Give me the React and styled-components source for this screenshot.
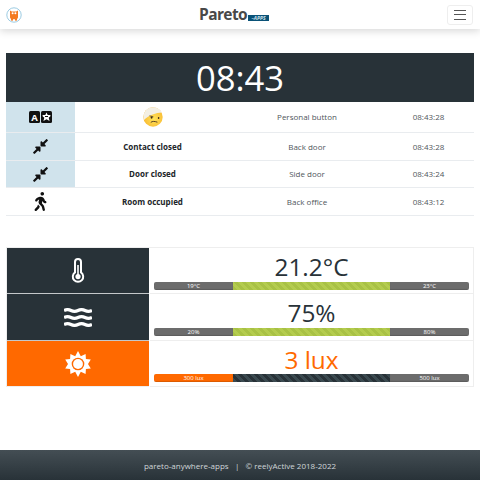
import React from 'react';
import styled, { createGlobalStyle } from 'styled-components';
import { FaCompressAlt, FaWalking } from 'react-icons/fa';

const Global = createGlobalStyle`
  html, body { margin: 0; padding: 0; background: #fff; }
  body { font-family: "Open Sans", "Noto Sans", sans-serif; color: #212529; }
  * { box-sizing: border-box; }
`;
const Page = styled.div`
  width: 480px; height: 480px; display: flex; flex-direction: column; overflow: hidden;
`;
const Navbar = styled.header`
  height: 29px; flex: none; display: flex; align-items: center; justify-content: space-between;
  padding: 0 7px 0 6px; background: #fff; box-shadow: 0 2px 8px rgba(0,0,0,.16); position: relative;
`;
const Brand = styled.div`
  display: flex; align-items: flex-end; position: absolute; left: 199px; top: 7px; height: 15px;
`;
const BrandName = styled.span`
  font-family: "Open Sans", sans-serif; font-weight: 700; font-size: 15.5px; line-height: 15px; color: #484848; letter-spacing: -0.6px;
`;
const AppsTag = styled.span`
  width: 21px; height: 6px; margin: 0 0 1px 1px; background: #0a5277; color: #cfe3ee;
  font: italic 700 5px/6px "Open Sans", sans-serif; text-align: center; overflow: hidden;
`;
const Toggler = styled.button`
  width: 26px; height: 20px; padding: 0; background: #fff; border: 1px solid #eee; border-radius: 3px;
  display: flex; flex-direction: column; align-items: center; justify-content: center; gap: 3.5px;
`;
const TogglerBar = styled.span`
  width: 12px; height: 1px; background: #555; display: block;
`;
const Main = styled.main`
  flex: 1; padding: 24px 6px 0;
`;
const Clock = styled.div`
  height: 49px; background: #283238; color: #fff; text-align: center; font-size: 34.6px; line-height: 49px; font-weight: 400;
`;
const Row = styled.div`
  display: grid; grid-template-columns: 69px 155px 154px 89px; height: ${p => p.$h}px; border-bottom: 1px solid #e9ecef;
  align-items: stretch;
`;
const IconCell = styled.div`
  display: flex; align-items: center; justify-content: center; background: ${p => p.$tint ? '#d0e3ec' : 'transparent'};
  color: #111;
`;
const Cell = styled.div`
  display: flex; align-items: center; justify-content: center; font-size: 8px; padding-bottom: 1px;
  font-weight: ${p => p.$bold ? 700 : 400};
  color: ${p => p.$bold ? '#212529' : '#4f565b'};
`;
const Stats = styled.section`
  margin: 31px 0 0 0; width: 468px; display: grid; grid-template-columns: 142px 1fr; grid-template-rows: 46px 47px 46px;
  border-top: 1px solid #eee; border-left: 1px solid #eee;
`;
const StatIcon = styled.div`
  display: flex; align-items: center; justify-content: center; color: #fff;
  background: ${p => p.$accent ? '#ff6900' : '#283238'};
  border-bottom: 1px solid ${p => p.$accent ? '#eee' : '#c4c8ca'};
`;
const StatBody = styled.div`
  margin-left: 1px; padding: 0 4px 0 4px; border-bottom: 1px solid #eee; border-right: 1px solid #eee;
  display: flex; flex-direction: column; align-items: stretch;
`;
const Value = styled.div`
  height: ${p => p.$accent ? 33 : 34}px; text-align: center; font-size: 24.4px; line-height: ${p => p.$accent ? 37 : 38}px; font-weight: 400;
  color: ${p => p.$accent ? '#ff6900' : '#283238'};
`;
const Progress = styled.div`
  height: 8px; display: grid; grid-template-columns: 79px 157px 79px; border-radius: 2px; overflow: hidden;
  background: #eee;
`;
const Segment = styled.div`
  font-size: 6px; line-height: 8px; text-align: center; color: #fff; background-size: 8px 8px;
  background-color: ${p => p.$c};
  ${p => p.$shade ? 'box-shadow: inset 0 -1px 1px rgba(0,0,0,.15);' : ''}
  ${p => p.$stripe ? `background-image: linear-gradient(45deg, ${p.$stripe} 25%, transparent 25%, transparent 50%, ${p.$stripe} 50%, ${p.$stripe} 75%, transparent 75%, transparent);` : ''}
`;
const Footer = styled.footer`
  height: 30px; flex: none; background: linear-gradient(180deg, #444e54, #283238); color: #d0d6d9;
  display: flex; align-items: center; justify-content: center; font-size: 8px; white-space: pre;
`;

const Owl = () => (
  <svg width="16" height="16" viewBox="0 0 16 16">
    <circle cx="8" cy="8" r="7.2" fill="#fff" stroke="#9ccbe2" strokeWidth="1" />
    <path d="M4 3.4 L5.8 4.6 H10.2 L12 3.4 V10.5 L11 12.2 H5 L4 10.5 Z" fill="#f47a20" />
    <circle cx="6.6" cy="6.3" r="1" fill="#fff" /><circle cx="9.4" cy="6.3" r="1" fill="#fff" />
    <rect x="5" y="12" width="2" height="1.6" fill="#f47a20" /><rect x="9" y="12" width="2" height="1.6" fill="#f47a20" />
  </svg>
);
const Lang = () => (
  <svg width="23" height="12" viewBox="0 0 23 12">
    <rect width="11" height="12" rx="1.5" fill="#111" /><rect x="12" width="11" height="12" rx="1.5" fill="#111" />
    <text x="5.5" y="9.6" textAnchor="middle" fontFamily="Open Sans, sans-serif" fontWeight="700" fontSize="9.5" fill="#fff">A</text>
    <path d="M17.5 1.6 L18.7 4 H21.4 V5.3 L19.7 6.8 L20.6 10 L17.5 8.2 L14.4 10 L15.3 6.8 L13.6 5.3 V4 H16.3 Z" fill="#fff" />
    <rect x="16" y="5" width="3" height="1" fill="#111" />
  </svg>
);
const Bandage = () => (
  <svg width="20" height="20" viewBox="0 0 20 20">
    <defs><radialGradient id="f" cx=".55" cy=".6" r=".6"><stop offset="0" stopColor="#ffe35a" /><stop offset="1" stopColor="#f8b62e" /></radialGradient></defs>
    <circle cx="10" cy="10" r="9.7" fill="url(#f)" />
    <path d="M.6 8.6 C1.4 3.8 5 .3 10 .3 C14 .3 17.6 2.6 19 5.6 C13 5.6 6 8.4 1 13 C.5 11.6 .4 10 .6 8.6 Z" fill="#f3efe4" />
    <path d="M6.4 8.8 L10.4 9.8" stroke="#4a3220" strokeWidth=".7" fill="none" />
    <ellipse cx="8.6" cy="10.6" rx="1" ry="1.1" fill="#3c2a1a" /><ellipse cx="15.6" cy="11" rx=".8" ry="1" fill="#3c2a1a" />
    <path d="M7.8 15.4 C9.4 14 11.6 14.2 14.4 15.2" stroke="#4a3220" strokeWidth=".9" fill="none" />
  </svg>
);
const Thermo = () => (
  <svg width="14" height="25" viewBox="0 0 14 25">
    <path d="M4 4 a3 3 0 0 1 6 0 V14.4 a5.2 5.2 0 1 1 -6 0 Z" fill="none" stroke="#fff" strokeWidth="2" />
    <circle cx="7" cy="18.6" r="2.6" fill="#fff" /><rect x="6.2" y="7" width="1.6" height="10" fill="#fff" />
  </svg>
);
const wave = 'M0 0 q3.5 -1.8 7 0 t7 0 t7 0 t7 0';
const Waves = () => (
  <svg width="28" height="19" viewBox="0 -2 28 19">
    {[0, 7, 14].map(y => (
      <path key={y} d={wave} transform={`translate(0 ${y + 0.5})`} fill="none" stroke="#fff" strokeWidth="3.2" />
    ))}
  </svg>
);
const Sun = () => (
  <svg width="26" height="26" viewBox="0 0 26 26">
    <path fill="#fff" d="M13 0 L15.8 5.3 L20.6 2.9 L20.9 8.1 L25.8 8.6 L23 13 L25.8 17.4 L20.9 17.9 L20.6 23.1 L15.8 20.7 L13 26 L10.2 20.7 L5.4 23.1 L5.1 17.9 L.2 17.4 L3 13 L.2 8.6 L5.1 8.1 L5.4 2.9 L10.2 5.3 Z" />
    <circle cx="13" cy="13" r="6.3" fill="#ff6900" /><circle cx="13" cy="13" r="4.9" fill="#fff" />
  </svg>
);

const events = [
  { h: 31, tint: true, icon: <Lang />, main: <Bandage />, place: 'Personal button', time: '08:43:28' },
  { h: 28, tint: true, icon: <FaCompressAlt size={17} />, main: 'Contact closed', place: 'Back door', time: '08:43:28' },
  { h: 27, tint: true, icon: <FaCompressAlt size={17} />, main: 'Door closed', place: 'Side door', time: '08:43:24' },
  { h: 28, icon: <FaWalking size={19} />, main: 'Room occupied', place: 'Back office', time: '08:43:12' },
];
const stats = [
  { icon: <Thermo />, value: '21.2°C', lo: '19°C', hi: '23°C' },
  { icon: <Waves />, value: '75%', lo: '20%', hi: '80%' },
  { icon: <Sun />, value: '3 lux', lo: '300 lux', hi: '500 lux', accent: true },
];

export default function App() {
  return (
    <Page>
      <Global />
      <Navbar>
        <Owl />
        <Brand><BrandName>Pareto</BrandName><AppsTag>–APPS</AppsTag></Brand>
        <Toggler aria-label="menu"><TogglerBar /><TogglerBar /><TogglerBar /></Toggler>
      </Navbar>
      <Main>
        <Clock>08:43</Clock>
        {events.map((e, i) => (
          <Row key={i} $h={e.h}>
            <IconCell $tint={e.tint}>{e.icon}</IconCell>
            <Cell $bold={typeof e.main === 'string'}>{e.main}</Cell>
            <Cell>{e.place}</Cell>
            <Cell>{e.time}</Cell>
          </Row>
        ))}
        <Stats>
          {stats.map((s, i) => (
            <React.Fragment key={i}>
              <StatIcon $accent={s.accent}>{s.icon}</StatIcon>
              <StatBody>
                <Value $accent={s.accent}>{s.value}</Value>
                <Progress>
                  <Segment $c={s.accent ? '#ff6900' : '#6c6c6c'} $shade>{s.lo}</Segment>
                  <Segment $c={s.accent ? '#283238' : '#b4cc4e'} $stripe={s.accent ? '#3b4a50' : '#a8c144'} />
                  <Segment $c="#6c6c6c" $shade>{s.hi}</Segment>
                </Progress>
              </StatBody>
            </React.Fragment>
          ))}
        </Stats>
      </Main>
      <Footer>pareto-anywhere-apps   |   © reelyActive 2018-2022</Footer>
    </Page>
  );
}
